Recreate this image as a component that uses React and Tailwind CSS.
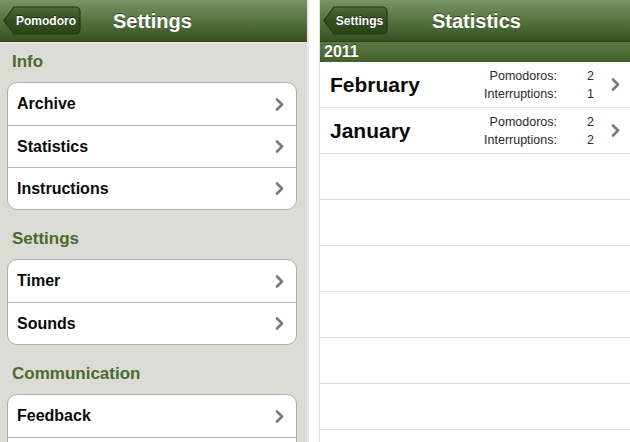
import React from "react";

const font = { fontFamily: '"Liberation Sans", Arial, sans-serif' };

function Chevron({ className = "" }) {
  return (
    <svg width="9" height="13" viewBox="0 0 9 13" className={`shrink-0 ${className}`}>
      <path d="M2 1.5 L7 6.5 L2 11.5" fill="none" stroke="#7a7a7a" strokeWidth="2.6" strokeLinecap="round" strokeLinejoin="round" />
    </svg>
  );
}

function BackButton({ label, width }) {
  return (
    <div className="relative flex h-[29px] shrink-0 items-center justify-center" style={{ width }}>
      <svg className="absolute inset-0" width={width} height="29" viewBox={`0 0 ${width} 29`}>
        <defs>
          <linearGradient id={`bb-${label}`} x1="0" y1="0" x2="0" y2="1">
            <stop offset="0" stopColor="#4d6a37" />
            <stop offset="0.5" stopColor="#334f20" />
            <stop offset="1" stopColor="#2b4419" />
          </linearGradient>
        </defs>
        <path
          d={`M0.8 14.5 L11 1 L${width - 6} 1 Q${width - 1} 1 ${width - 1} 6 L${width - 1} 23 Q${width - 1} 28 ${width - 6} 28 L11 28 Z`}
          fill={`url(#bb-${label})`}
          stroke="#22371a"
          strokeWidth="1.2"
        />
      </svg>
      <span className="relative pl-[8px] text-[12px] font-bold text-white [text-shadow:0_-1px_0_rgba(0,0,0,0.5)]">{label}</span>
    </div>
  );
}

function Header({ back, backWidth, title, titleClass }) {
  return (
    <div className="relative flex h-[42px] shrink-0 items-center border-b border-[#2a3f1a] bg-linear-to-b from-[#7a9566] via-[#55733f] to-[#35521f] px-[3px]">
      <BackButton label={back} width={backWidth} />
      <div className={`absolute inset-y-0 flex items-center text-[20px] font-bold text-white [text-shadow:0_-1px_0_rgba(0,0,0,0.45)] ${titleClass}`}>
        {title}
      </div>
    </div>
  );
}

function Card({ items }) {
  return (
    <div className="mx-[7px] w-[290px] shrink-0 overflow-hidden rounded-[10px] border border-[#acacac] bg-white">
      {items.map((t, i) => (
        <div
          key={i}
          className={`flex h-[42px] items-center justify-between pl-[9px] pr-[12px] ${i > 0 ? "border-t border-[#b8b8b8]" : ""}`}
        >
          <span className="text-[16px] font-bold text-[#0a0a0a]">{t}</span>
          {t ? <Chevron /> : null}
        </div>
      ))}
    </div>
  );
}

function SectionTitle({ children }) {
  return (
    <div className="mb-[8px] flex h-[24px] items-center pl-[12px] text-[17px] font-bold text-[#4b6a2e]">{children}</div>
  );
}

function MonthRow({ month, p, i }) {
  return (
    <div className="flex h-[46px] shrink-0 items-center border-b border-[#dedede] pl-[10px] pr-[10px]">
      <span className="flex-1 text-[21px] font-bold text-[#0a0a0a]">{month}</span>
      <div className="flex flex-col items-end text-[12.5px] leading-[18px] text-[#2a2a2a]">
        <span>Pomodoros:</span>
        <span>Interruptions:</span>
      </div>
      <div className="flex w-[40px] flex-col items-end pr-[3px] text-[12.5px] leading-[18px] text-[#2a2a2a]">
        <span>{p}</span>
        <span>{i}</span>
      </div>
      <Chevron className="ml-[14px]" />
    </div>
  );
}

export default function App() {
  return (
    <div className="flex h-[442px] w-[630px] overflow-hidden bg-white" style={font}>
      {/* Left panel */}
      <div className="flex h-full w-[307px] shrink-0 flex-col overflow-hidden bg-[#dcdcd6]">
        <Header back="Pomodoro" backWidth={78} title="Settings" titleClass="left-[113px]" />
        <div className="h-px shrink-0 bg-[#eeeeea]" />
        <div className="shrink-0 pt-[7px]">
          <SectionTitle>Info</SectionTitle>
          <Card items={["Archive", "Statistics", "Instructions"]} />
        </div>
        <div className="shrink-0 pt-[17px]">
          <SectionTitle>Settings</SectionTitle>
          <Card items={["Timer", "Sounds"]} />
        </div>
        <div className="shrink-0 pt-[17px]">
          <SectionTitle>Communication</SectionTitle>
          <Card items={["Feedback", ""]} />
        </div>
      </div>
      <div className="h-full w-[2px] shrink-0 bg-[#e8e8e4]" />
      <div className="h-full w-[10px] shrink-0 bg-white" />
      {/* Right panel */}
      <div className="flex h-full flex-1 flex-col overflow-hidden border-l border-[#e2e2e2] bg-white">
        <Header back="Settings" backWidth={65} title="Statistics" titleClass="left-[112px]" />
        <div className="flex h-[20px] shrink-0 items-center bg-linear-to-b from-[#5b7a43] to-[#41602b] pl-[4px] text-[16px] font-bold text-white [text-shadow:0_-1px_0_rgba(0,0,0,0.4)]">
          2011
        </div>
        <MonthRow month="February" p="2" i="1" />
        <MonthRow month="January" p="2" i="2" />
        {Array.from({ length: 7 }).map((_, k) => (
          <div key={k} className="h-[46px] shrink-0 border-b border-[#dedede]" />
        ))}
      </div>
    </div>
  );
}
